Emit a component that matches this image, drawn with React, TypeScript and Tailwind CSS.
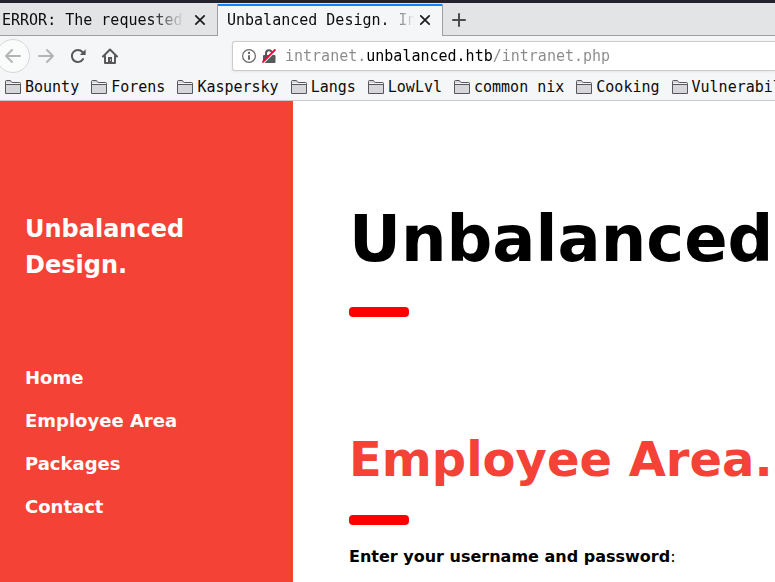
import React from "react";

const bookmarks = [
  "Bounty",
  "Forens",
  "Kaspersky",
  "Langs",
  "LowLvl",
  "common nix",
  "Cooking",
  "Vulnerabilities",
];

const menu = ["Home", "Employee Area", "Packages", "Contact"];

function CloseIcon() {
  return (
    <svg width="16" height="16" viewBox="0 0 16 16" fill="none" stroke="#1b1b1d" strokeWidth="1.7" strokeLinecap="round">
      <path d="M3.8 3.8l8.4 8.4M12.2 3.8l-8.4 8.4" />
    </svg>
  );
}

function FolderIcon() {
  return (
    <svg width="16" height="16" viewBox="0 0 16 16" className="shrink-0">
      <path
        d="M.5 14.5v-12q0-1 1-1h3.6q.6 0 .9.6l.4.8q.3.6.9.6h7.2q1 0 1 1v10z"
        fill="#d7d7db"
        stroke="#58585a"
      />
      <path d="M1 4.5h14" stroke="#f5f6f7" />
      <path d="M1 5.5h14" stroke="#58585a" />
    </svg>
  );
}

function ArrowIcon({ forward = false }: { forward?: boolean }) {
  return (
    <svg width="16" height="16" viewBox="0 0 16 16" fill="none" stroke="#b4b5b7" strokeWidth="2" strokeLinecap="round" strokeLinejoin="round">
      {forward ? <path d="M1 8h14M9 2l6 6-6 6" /> : <path d="M15 8H1M7 2L1 8l6 6" />}
    </svg>
  );
}

function ReloadIcon() {
  return (
    <svg width="16" height="16" viewBox="0 0 16 16">
      <path d="M13.1 11A6 6 0 1 1 12.4 4" fill="none" stroke="#58585a" strokeWidth="2" strokeLinecap="round" />
      <path d="M15.6 1.2v5.3q0 .5-.5.5H9.8z" fill="#58585a" />
    </svg>
  );
}

function HomeIcon() {
  return (
    <svg width="16" height="16" viewBox="0 0 16 16" fill="none" stroke="#58585a" strokeWidth="2" strokeLinecap="round" strokeLinejoin="round">
      <path d="M1 8.5L8 1.5l7 7" />
      <path d="M3 8v7h10V8" />
      <path d="M6 15V9h4v6z" fill="#58585a" stroke="none" />
      <path d="M8.5 11.5v1" stroke="#c4c5c7" strokeWidth="1" />
    </svg>
  );
}

function InfoIcon() {
  return (
    <svg width="14" height="14" viewBox="0 0 14 14">
      <circle cx="7" cy="7" r="6.4" fill="none" stroke="#666668" strokeWidth="1.2" />
      <path d="M7 6.2v4.6" stroke="#58585a" strokeWidth="1.8" />
      <circle cx="7" cy="3.9" r="1.1" fill="#58585a" />
    </svg>
  );
}

function InsecureIcon() {
  return (
    <svg width="14" height="14" viewBox="0 0 14 14">
      <path d="M4 7V4.4a3.1 3.1 0 0 1 6.2 0V7" fill="none" stroke="#58585a" strokeWidth="2" />
      <rect x="1" y="6" width="12.5" height="8" rx="1" fill="#58585a" />
      <path d="M1.3 14.2L14.2 1.3" stroke="#fff" strokeWidth="1.4" />
      <path d="M.4 13.4L13.4.4" stroke="#ff0039" strokeWidth="1.9" />
    </svg>
  );
}

function TabStrip() {
  return (
    <div className="flex h-8 bg-[#e3e4e6] text-[#0c0c0d]">
      <div className="flex w-[217px] shrink-0 items-center border-b border-[#a0a0a2] pl-0.5">
        <button className="w-[182px] overflow-hidden text-left whitespace-nowrap mask-[linear-gradient(to_left,transparent,black_32px)]">
          ERROR: The requested
        </button>
        <button aria-label="Close tab" className="ml-2"><CloseIcon /></button>
      </div>
      <div className="flex w-[226px] shrink-0 items-center border-x border-x-[#a0a0a2] bg-[#f5f6f7] pl-[9px] shadow-[inset_0_2px_0_#0a84ff]">
        <button className="w-[188px] overflow-hidden text-left whitespace-nowrap mask-[linear-gradient(to_left,transparent,black_32px)]">
          Unbalanced Design. In
        </button>
        <button aria-label="Close tab" className="ml-0.5"><CloseIcon /></button>
      </div>
      <div className="flex flex-1 items-center border-b border-[#a0a0a2] pl-2">
        <button aria-label="New tab">
          <svg width="16" height="16" viewBox="0 0 16 16" fill="none" stroke="#4b4b4d" strokeWidth="2" strokeLinecap="round">
            <path d="M8 2v12M2 8h12" />
          </svg>
        </button>
      </div>
    </div>
  );
}

function Toolbar() {
  return (
    <div className="flex h-10 items-center">
      <button aria-label="Back" className="-ml-1 flex size-[34px] shrink-0 items-center justify-center rounded-full border border-[#d6d7d8] bg-[#fafbfb]">
        <ArrowIcon />
      </button>
      <div className="flex flex-none items-center gap-4 pl-2">
        <button aria-label="Forward"><ArrowIcon forward /></button>
        <button aria-label="Reload"><ReloadIcon /></button>
        <button aria-label="Home page"><HomeIcon /></button>
      </div>
      <div className="ml-[114px] flex h-[30px] flex-1 items-center rounded-l-[3px] border border-r-0 border-[#cbcccd] bg-white pl-[9px] shadow-[0_1px_3px_rgba(0,0,0,0.07)]">
        <InfoIcon />
        <span className="ml-1.5"><InsecureIcon /></span>
        <input
          aria-label="Address"
          type="text"
          defaultValue="intranet.unbalanced.htb/intranet.php"
          className="ml-[9px] min-w-0 flex-1 bg-[linear-gradient(to_right,#8a8a8c_81px,#000_81px,#000_207px,#8a8a8c_207px)] bg-clip-text text-transparent outline-none"
        />
      </div>
    </div>
  );
}

export default function App() {
  return (
    <div className="flex min-h-screen flex-col overflow-hidden bg-white font-['DejaVu_Sans',sans-serif] text-black">
      <header className="border-b border-[#c8c8ca] bg-[#f5f6f7] font-['DejaVu_Sans_Mono',monospace] text-[15px] leading-5">
        <div className="h-[3px] bg-[#23222d]" />
        <div className="border-t border-[#e3e4e6]">
          <TabStrip />
        </div>
        <Toolbar />
        <nav aria-label="Bookmarks" className="flex h-6 items-start gap-3 overflow-hidden pt-px pl-[5px] text-[#0c0c0d]">
          {bookmarks.map((name) => (
            <a key={name} href="#" className="flex shrink-0 items-center gap-1 whitespace-nowrap">
              <FolderIcon />
              {name}
            </a>
          ))}
        </nav>
      </header>
      <div className="flex flex-1">
        <aside className="w-[293px] shrink-0 bg-[#f44336] px-[25px] font-bold text-white">
          <h3 className="w-50 pt-[110px] text-2xl leading-9">Unbalanced Design.</h3>
          <nav aria-label="Site" className="flex flex-col gap-4 pt-[81px] text-lg leading-[27px]">
            {menu.map((item) => (
              <a key={item} href="#">{item}</a>
            ))}
          </nav>
        </aside>
        <main className="min-w-0 flex-1 pl-14">
          <h1 className="pt-[90px] text-[64px] leading-[96px] font-bold">Unbalanced</h1>
          <hr className="mt-5 h-2.5 w-15 rounded border-0 bg-[#ff0000]" />
          <h2 className="pt-[106px] text-5xl leading-[72px] font-bold whitespace-nowrap text-[#f44336]">Employee Area.</h2>
          <hr className="mt-5 h-2.5 w-15 rounded border-0 bg-[#ff0000]" />
          <p className="pt-5 text-base leading-6"><b>Enter your username and password</b>:</p>
        </main>
      </div>
    </div>
  );
}
